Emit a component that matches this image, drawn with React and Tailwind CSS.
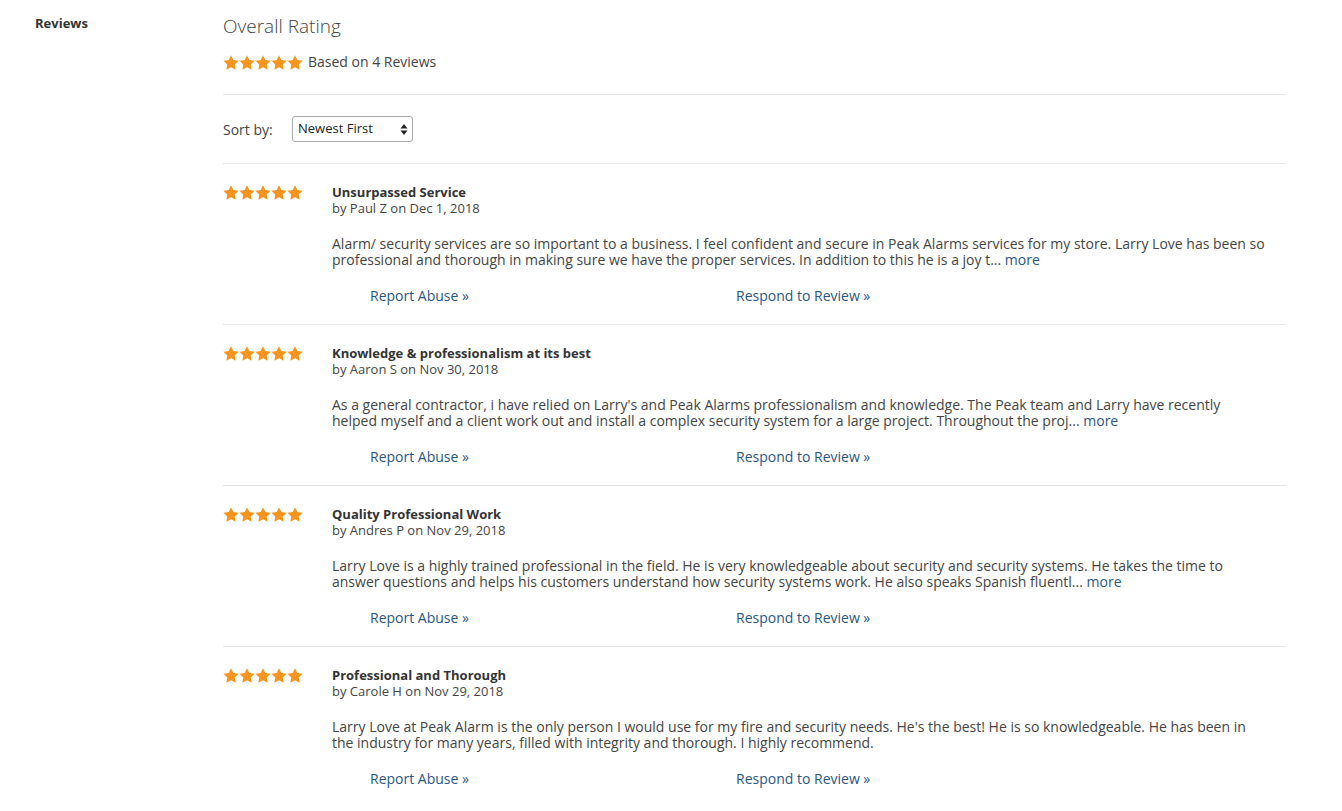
import React from "react";

const Star = () => (
  <svg width="16" height="15" viewBox="0.5 0.3 23 22" className="shrink-0">
    <path d="M12 0.8l3.4 7 7.7 1.1-5.6 5.4 1.3 7.7L12 18.4 5.2 22l1.3-7.7L0.9 8.9l7.7-1.1z" fill="#f7941d" />
  </svg>
);

const Stars = () => (
  <div className="flex items-center">
    {[0, 1, 2, 3, 4].map((i) => (
      <Star key={i} />
    ))}
  </div>
);

const reviews = [
  {
    title: "Unsurpassed Service",
    by: "by Paul Z on Dec 1, 2018",
    l1: "Alarm/ security services are so important to a business. I feel confident and secure in Peak Alarms services for my store. Larry Love has been so",
    l2: "professional and thorough in making sure we have the proper services. In addition to this he is a joy t...",
    more: true,
  },
  {
    title: "Knowledge & professionalism at its best",
    by: "by Aaron S on Nov 30, 2018",
    l1: "As a general contractor, i have relied on Larry's and Peak Alarms professionalism and knowledge. The Peak team and Larry have recently",
    l2: "helped myself and a client work out and install a complex security system for a large project. Throughout the proj...",
    more: true,
  },
  {
    title: "Quality Professional Work",
    by: "by Andres P on Nov 29, 2018",
    l1: "Larry Love is a highly trained professional in the field. He is very knowledgeable about security and security systems. He takes the time to",
    l2: "answer questions and helps his customers understand how security systems work. He also speaks Spanish fluentl...",
    more: true,
  },
  {
    title: "Professional and Thorough",
    by: "by Carole H on Nov 29, 2018",
    l1: "Larry Love at Peak Alarm is the only person I would use for my fire and security needs. He's the best! He is so knowledgeable. He has been in",
    l2: "the industry for many years, filled with integrity and thorough. I highly recommend.",
    more: false,
  },
];

export default function App() {
  return (
    <div className="flex bg-white text-[#333]" style={{ fontFamily: "'Open Sans', Lato, sans-serif" }}>
      <div className="w-[223px] shrink-0 pl-[35px] pt-[15px]">
        <div className="text-[13px] font-bold text-[#333] leading-4">Reviews</div>
      </div>
      <div className="w-[1063px] shrink-0">
        <h2 className="pt-[14px] text-[19px] font-light leading-6 text-[#444]">Overall Rating</h2>
        <div className="mt-[14px] flex items-center gap-[5px] text-[14px] leading-5 text-[#444]">
          <Stars />
          <span>Based on 4 Reviews</span>
        </div>
        <div className="mt-[22px] border-t border-[#e6e6e6]" />
        <div className="flex h-[68px] items-center text-[14px] text-[#444]">
          <span className="w-[69px]">Sort by:</span>
          <div className="flex h-[26px] w-[121px] items-center justify-between rounded-[3px] border border-[#a9a9a9] pl-[5px] pr-[4px] text-[13px] text-[#222]">
            <span>Newest First</span>
            <svg width="8" height="13" viewBox="0 0 8 13">
              <path d="M4 1L7.5 5.5H0.5z" fill="#222" />
              <path d="M4 12L7.5 7.5H0.5z" fill="#222" />
            </svg>
          </div>
        </div>
        {reviews.map((r, i) => (
          <div key={i} className="flex h-[161px] border-t border-[#e6e6e6] pt-[20px]">
            <div className="w-[109px] shrink-0 pt-[1px]">
              <Stars />
            </div>
            <div className="flex-1">
              <div className="text-[13px] font-bold leading-4 text-[#333]">{r.title}</div>
              <div className="text-[13px] leading-4 text-[#444]">{r.by}</div>
              <p className="mt-[20px] whitespace-pre-line text-[14px] leading-4 text-[#444]">
                {r.l1 + "\n" + r.l2 + (r.more ? " " : "")}
                {r.more && <a className="text-[#2a5682]">more</a>}
              </p>
              <div className="mt-[20px] flex pl-[38px] text-[14px] leading-4 text-[#2a5682]">
                <a className="w-[366px]">Report Abuse »</a>
                <a>Respond to Review »</a>
              </div>
            </div>
          </div>
        ))}
      </div>
    </div>
  );
}
